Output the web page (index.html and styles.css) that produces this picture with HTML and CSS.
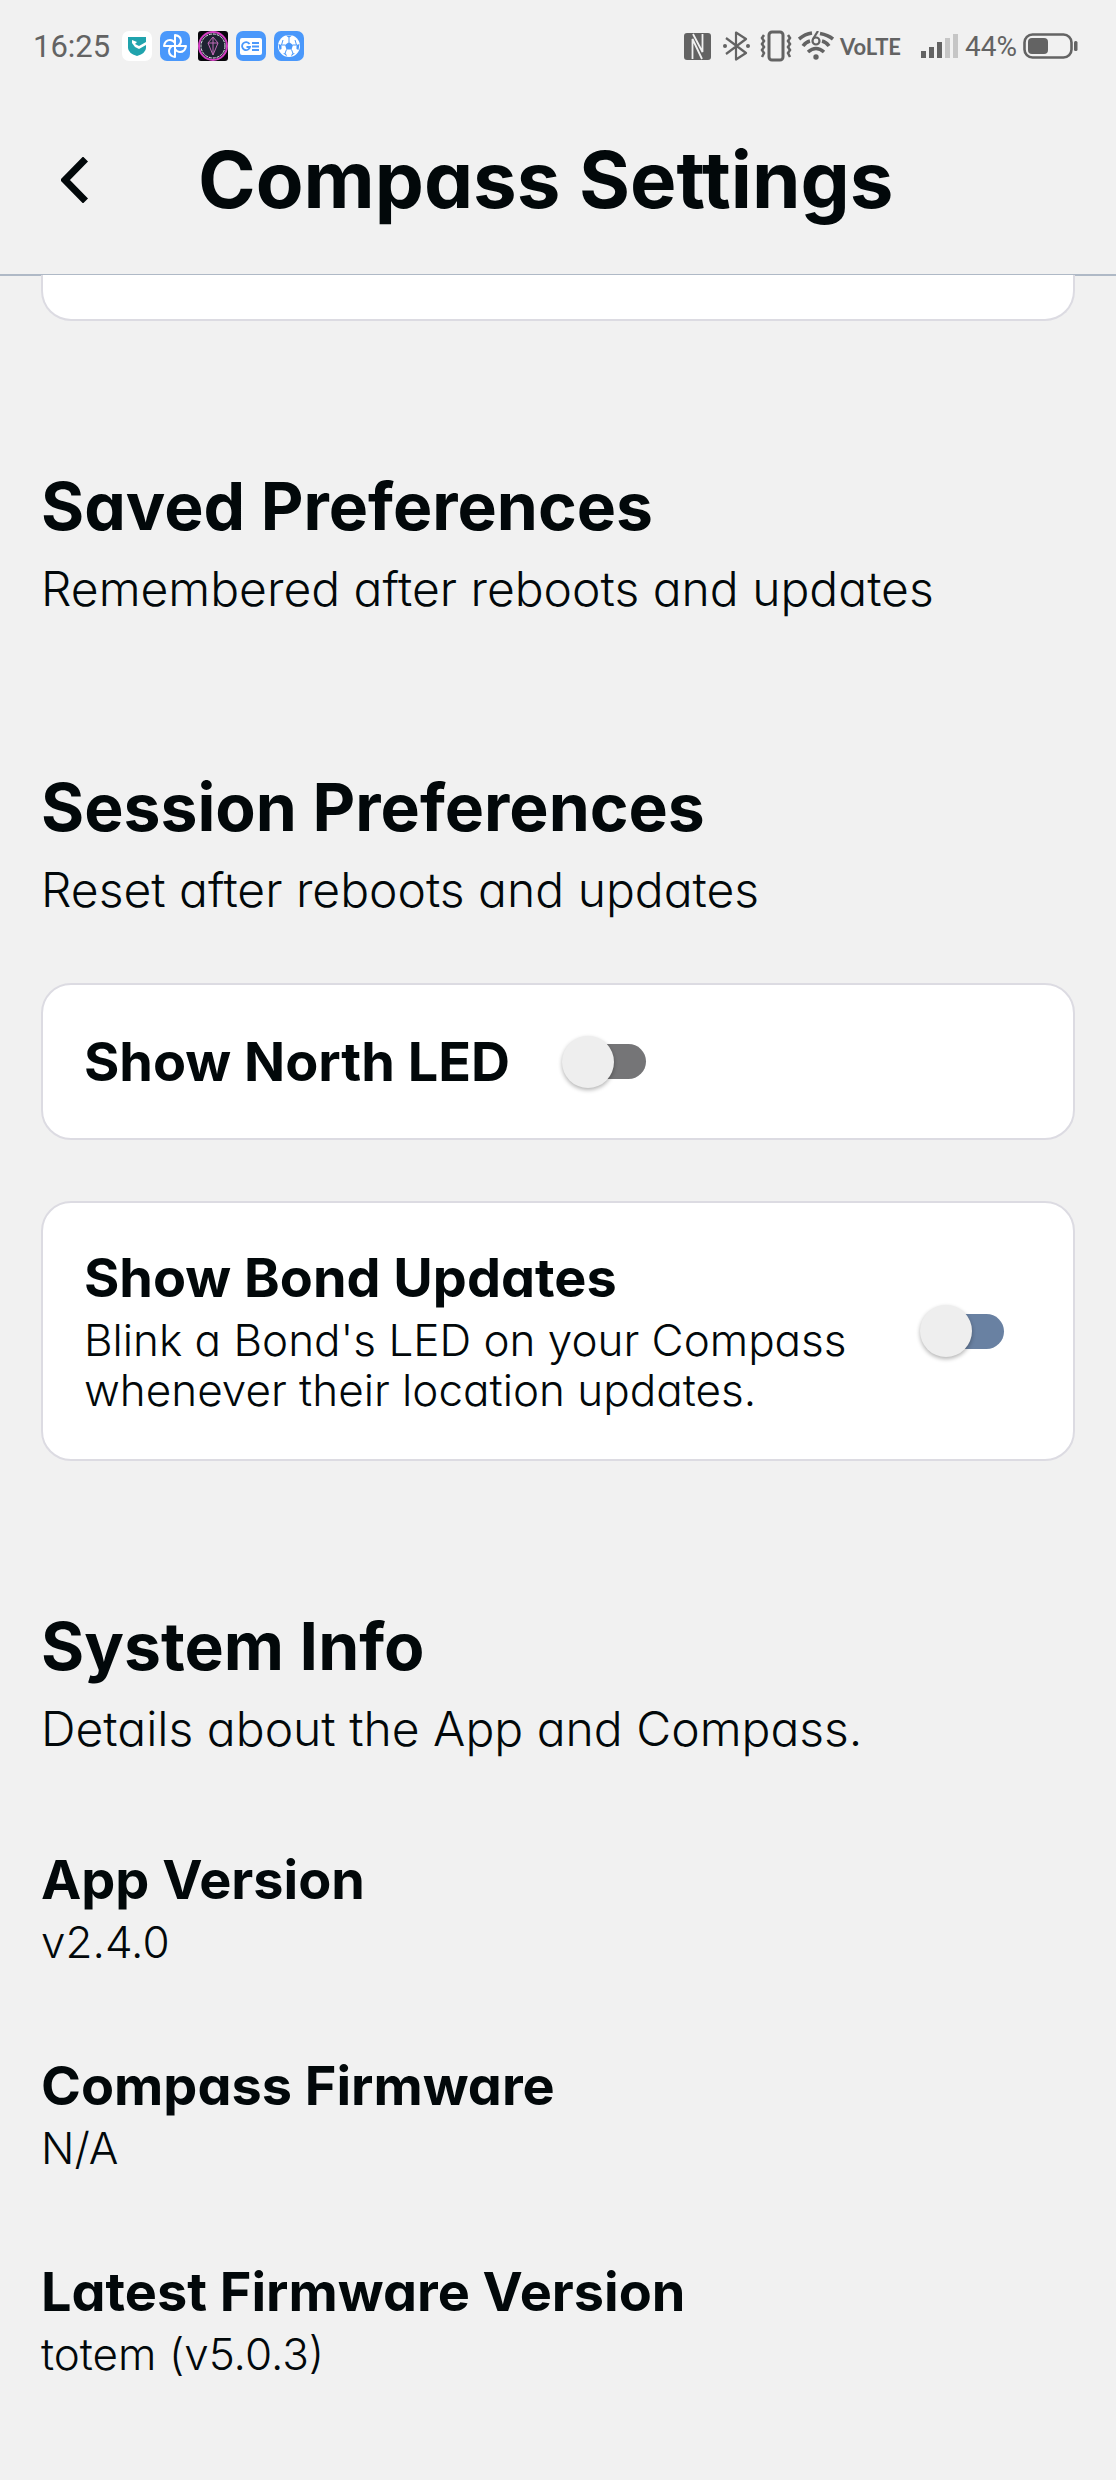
FILE: index.html
```html
<!doctype html>
<html lang="en">
	<head>
		<meta charset="UTF-8">
		<meta name="viewport" content="width=device-width, initial-scale=1.0">
		<title>Compass Settings</title>
		<link rel="stylesheet" href="styles.css">
	</head>
	<body>
		<div class="statusbar">
			<span class="time">16:25</span>
			<div class="notifications">
				<svg class="app" viewBox="0 0 30 30">
					<rect width="30" height="30" rx="7" fill="#fff"/>
					<path d="M6 6H24V17Q24 22 15 25Q6 22 6 17Z" fill="#20a3ad"/>
					<path d="M10 9L15 11L13 13L17 15L24 11V14L17 18L13 16L10 12Z" fill="#fff"/>
				</svg>
				<svg class="app" viewBox="0 0 30 30">
					<rect width="30" height="30" rx="7" fill="#4a98fb"/>
					<g fill="none" stroke="#fff" stroke-width="2" stroke-linejoin="round">
						<path d="M15 15V4Q21 5 21 10Q21 13 18 15Z"/>
						<path d="M15 15H26Q25 21 20 21Q17 21 15 18Z"/>
						<path d="M15 15V26Q9 25 9 20Q9 17 12 15Z"/>
						<path d="M15 15H4Q5 9 10 9Q13 9 15 12Z"/>
					</g>
				</svg>
				<svg class="app" viewBox="0 0 30 30">
					<rect width="30" height="30" rx="3" fill="#08060c"/>
					<circle cx="15" cy="15" r="14" fill="#1d2331" stroke="#d63fc4" stroke-width="2"/>
					<circle cx="15" cy="15" r="12" fill="none" stroke="#e8e8f0" stroke-dasharray="3 1"/>
					<path d="M15 6L20 12L15 24L10 12ZM15 6V24M10 12H20" fill="none" stroke="#c06bb8"/>
				</svg>
				<svg class="app" viewBox="0 0 30 30">
					<rect width="30" height="30" rx="7" fill="#4a98fb"/>
					<rect x="4" y="7" width="22" height="17" rx="2" fill="#fff"/>
					<path d="M13.500 13A4 4 0 1 0 14 16H10.500M16 12H23M16 15.500H23M16 19H23" fill="none" stroke="#4a98fb" stroke-width="1.800"/>
				</svg>
				<svg class="app" viewBox="0 0 30 30">
					<rect width="30" height="30" rx="7" fill="#4a98fb"/>
					<circle cx="15" cy="15" r="11" fill="#fff"/>
					<path d="M15 11L19 14L17.500 18.500H12.500L11 14Z" fill="#4a98fb"/>
					<path d="M12 4.500L15 7L18 4.500ZM4.500 13L7.500 14L7.500 18L5.500 19ZM25.500 13L22.500 14L22.500 18L24.500 19ZM9 22L12 22.500L13 25.500ZM21 22L18 22.500L17 25.500Z" fill="#4a98fb"/>
					<path d="M15 7V11M11 14L7.500 14M19 14H22.500M12.500 18.500L11 22.500M17.500 18.500L19 22.500M7.500 14L9 9M22.500 14L21 9" fill="none" stroke="#4a98fb"/>
				</svg>
			</div>
			<div class="system">
				<svg width="27" height="27" viewBox="0 0 27 27">
					<rect width="27" height="27" rx="3" fill="#636363"/>
					<path d="M8.500 26V6L18 26M9 1L18.500 19V1" fill="none" stroke="#f1f1f1" stroke-width="1.800"/>
				</svg>
				<svg class="bluetooth" width="27" height="30" viewBox="0 0 27 30">
					<path d="M3 7L23 22L13 28.500V1.500L23 8L3 23" fill="none" stroke="#636363" stroke-width="2.200" stroke-linejoin="round"/>
					<circle cx="2" cy="15" r="2" fill="#636363"/>
					<circle cx="25" cy="15" r="2" fill="#636363"/>
				</svg>
				<svg width="32" height="32" viewBox="0 0 32 32">
					<rect x="9" y="2" width="14" height="28" rx="3" fill="none" stroke="#636363" stroke-width="3"/>
					<path d="M4 5L2 8L4 11L2 14L4 17L2 20L4 23L2 27M28 5L30 8L28 11L30 14L28 17L30 20L28 23L30 27" fill="none" stroke="#636363" stroke-width="2.500"/>
				</svg>
				<svg width="36" height="30" viewBox="0 0 36 30">
					<path d="M1 8Q7 3 14 2M22 2.500Q30 4 35 8M5 15Q8 11 12 10M24 10Q28 11 31 15M10 21Q18 14 26 21" fill="none" stroke="#636363" stroke-width="3.600"/>
					<path d="M20 0L15 8" fill="none" stroke="#636363" stroke-width="2.200"/>
					<circle cx="18" cy="10" r="3.500" fill="none" stroke="#636363" stroke-width="2.200"/>
					<circle cx="18" cy="26" r="2.700" fill="#636363"/>
				</svg>
				<span class="volte">VoLTE</span>
				<svg class="signal" width="38" height="26" viewBox="0 0 38 26">
					<path d="M0 18h5v7h-5zM8 14h5v11h-5zM16 9h5v16h-5z" fill="#636363"/>
					<path d="M24 5h5v20h-5zM32 1h5v24h-5z" fill="#c6c6c6"/>
				</svg>
				<span class="percent">44%</span>
				<svg width="55" height="26" viewBox="0 0 55 26">
					<rect x="1.500" y="1.500" width="47" height="23" rx="8" fill="none" stroke="#636363" stroke-width="2.600"/>
					<rect x="5" y="5" width="20" height="16" rx="4" fill="#636363"/>
					<rect x="51" y="8" width="3.500" height="10" rx="1.500" fill="#636363"/>
				</svg>
			</div>
		</div>

		<header class="header">
			<button class="back" aria-label="Back">
				<svg width="28" height="46" viewBox="0 0 28 46">
					<path d="M24.500 2L4 23L24.500 44" fill="none" stroke="#02080a" stroke-width="7"/>
				</svg>
			</button>
			<h1>Compass Settings</h1>
		</header>

		<main>
			<div class="card card-cut"></div>

			<section>
				<h2>Saved Preferences</h2>
				<p class="lead">Remembered after reboots and updates</p>
			</section>

			<section>
				<h2>Session Preferences</h2>
				<p class="lead">Reset after reboots and updates</p>
				<div class="card">
					<label class="label" for="north">Show North LED</label>
					<input type="checkbox" class="switch" id="north">
				</div>
				<div class="card">
					<div class="text">
						<label class="label" for="bond">Show Bond Updates</label>
						<p class="detail">Blink a Bond's LED on your Compass whenever their location updates.</p>
					</div>
					<input type="checkbox" class="switch switch-blue" id="bond">
				</div>
			</section>

			<section>
				<h2>System Info</h2>
				<p class="lead">Details about the App and Compass.</p>
				<dl>
					<dt class="label">App Version</dt>
					<dd class="detail">v2.4.0</dd>
					<dt class="label">Compass Firmware</dt>
					<dd class="detail">N/A</dd>
					<dt class="label">Latest Firmware Version</dt>
					<dd class="detail">totem (v5.0.3)</dd>
				</dl>
			</section>
		</main>
	</body>
</html>
```
FILE: styles.css
```css
*{
	box-sizing: border-box;
}

body{
	margin: 0;
	background: #f1f1f1;
	color: #02080a;
	font-family: Inter, "Liberation Sans", sans-serif;
	/* single-storey a */
	font-feature-settings: "cv11";
}

h1, h2, p, dl, dd{
	margin: 0;
}

.statusbar{
	display: flex;
	align-items: center;
	height: 92px;
	padding: 0 38px 0 33px;
	color: #636363;
	font-family: Roboto, sans-serif;
}

.time{
	font-size: 31px;
}

.notifications{
	display: flex;
	gap: 8px;
	margin-left: 12px;
}

.app{
	width: 30px;
	height: 30px;
}

.system{
	display: flex;
	align-items: center;
	gap: 6px;
	margin-left: auto;
}

.bluetooth{
	margin: 0 4px 0 6px;
}

.volte{
	font-family: Lato, sans-serif;
	font-size: 22px;
	font-weight: 700;
}

.signal{
	margin-left: 14px;
}

.percent{
	font-size: 28px;
}

.header{
	display: flex;
	align-items: center;
	height: 184px;
	padding-bottom: 6px;
	border-bottom: 2px solid #afb9c6;
}

.back{
	display: flex;
	flex: none;
	width: 198px;
	padding: 0 0 0 61px;
	border: 0;
	background: none;
}

h1{
	font-size: 78px;
	font-weight: 700;
	line-height: 88px;
}

main{
	padding: 0 41px 80px;
}

.card{
	display: flex;
	align-items: center;
	gap: 60px;
	min-height: 157px;
	margin-top: 61px;
	padding: 44px 69px 44px 41px;
	border: 2px solid #dcdbe2;
	border-radius: 30px;
	background: #fff;
}

.card-cut{
	min-height: 46px;
	margin-top: -1px;
	padding: 0;
	border-top: 0;
	border-radius: 0 0 30px 30px;
}

section{
	padding-top: 145px;
}

h2{
	font-size: 66px;
	font-weight: 700;
	line-height: 80px;
}

.lead{
	margin: 11px 0 1px;
	font-size: 48px;
	font-weight: 300;
	line-height: 64px;
}

.label{
	display: block;
	font-size: 54px;
	font-weight: 700;
	line-height: 62px;
}

.text{
	flex: 1;
}

.detail{
	margin-top: 6px;
	font-size: 44px;
	font-weight: 300;
	line-height: 50px;
}

dt{
	margin-top: 88px;
}

.switch{
	appearance: none;
	display: flex;
	align-items: center;
	flex: none;
	width: 76px;
	height: 35px;
	margin: 0;
	border-radius: 18px;
	background: #757577;
}

.switch-blue{
	background: #6981a2;
}

.switch::before{
	content: "";
	flex: none;
	width: 52px;
	height: 52px;
	margin-left: -8px;
	border-radius: 50%;
	background: #eee;
	box-shadow: 0 2px 4px rgba(0, 0, 0, .3);
}
```
